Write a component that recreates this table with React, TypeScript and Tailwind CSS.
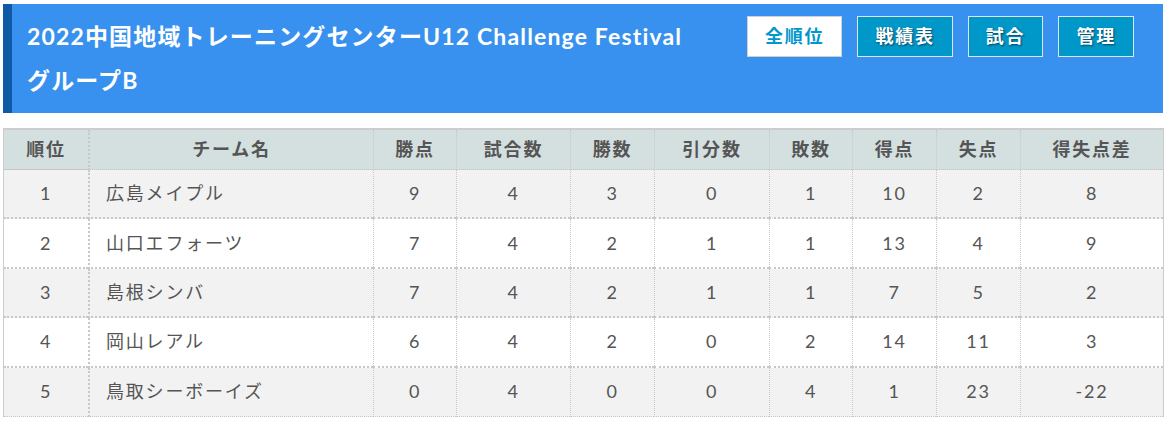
import React from "react";

const cols = [84, 285, 83, 114, 84, 115, 83, 84, 84, 143];
const heads = ["順位", "チーム名", "勝点", "試合数", "勝数", "引分数", "敗数", "得点", "失点", "得失点差"];
const rows: (string | number)[][] = [
  [1, "広島メイプル", 9, 4, 3, 0, 1, 10, 2, 8],
  [2, "山口エフォーツ", 7, 4, 2, 1, 1, 13, 4, 9],
  [3, "島根シンバ", 7, 4, 2, 1, 1, 7, 5, 2],
  [4, "岡山レアル", 6, 4, 2, 0, 2, 14, 11, 3],
  [5, "鳥取シーボーイズ", 0, 4, 0, 0, 4, 1, 23, -22],
];

const btns = ["全順位", "戦績表", "試合", "管理"];

export default function App() {
  return (
    <div className="w-[1170px] h-[426px] bg-white font-['Lato','Noto_Sans_CJK_JP',sans-serif]">
      <div className="w-[1160px] ml-[3px] pt-[4px]">
        <div className="flex items-start bg-[#3891ee] border-l-[9px] border-[#0f5aa5] h-[109px]">
          <div className="flex-1 pl-[15px] pt-[10px] text-white font-bold text-[23px] leading-[44px] tracking-[0.05em]">
            <div>2022中国地域トレーニングセンターU12 Challenge Festival</div>
            <div>グループB</div>
          </div>
          <div className="flex gap-[15px] pt-[12px] pr-[29px]">
            {btns.map((b, i) => (
              <div
                key={b}
                className={
                  i === 0
                    ? "h-[41px] px-[17px] flex items-center justify-center border border-[#d0d0d0] bg-white text-[#0097cc] font-bold text-[18px] tracking-[0.1em]"
                    : "h-[41px] px-[17px] flex items-center justify-center border border-[#dde6ee] bg-[#0097c9] text-white font-bold text-[18px] tracking-[0.1em] [text-shadow:1px_1px_2px_rgba(0,0,0,0.55)]"
                }
              >
                {b}
              </div>
            ))}
          </div>
        </div>
        <table className="mt-[15px] w-[1160px] table-fixed border-separate border-spacing-0 border-t-2 border-l border-r border-[#cccccc]">
          <colgroup>
            {cols.map((w, i) => (
              <col key={i} style={{ width: w }} />
            ))}
          </colgroup>
          <thead>
            <tr className="bg-[#d4e0e0] h-[40px]">
              {heads.map((h, i) => (
                <th
                  key={h}
                  className={
                    "p-0 text-center text-[18px] font-bold text-[#555555] tracking-[0.1em] border-b border-b-[#c4c4c4] " +
                    (i === 0 ? "" : i === 1 ? "border-l-2 border-dotted border-l-[#c8c8c8]" : "border-l border-dotted border-l-[#c8c8c8]")
                  }
                >
                  {h}
                </th>
              ))}
            </tr>
          </thead>
          <tbody>
            {rows.map((r, ri) => (
              <tr key={ri} className={(ri % 2 === 0 ? "bg-[#f2f2f2]" : "bg-white") + " h-[49.4px]"}>
                {r.map((c, i) => (
                  <td
                    key={i}
                    className={
                      "p-0 text-[18px] text-[#555555] tracking-[0.1em] border-dotted border-[#c8c8c8] " +
                      (ri === rows.length - 1 ? "border-b " : "border-b-2 ") +
                      (i === 0 ? "text-center" : i === 1 ? "text-left pl-[16px] border-l-2" : "text-center border-l")
                    }
                  >
                    {c}
                  </td>
                ))}
              </tr>
            ))}
          </tbody>
        </table>
      </div>
    </div>
  );
}
